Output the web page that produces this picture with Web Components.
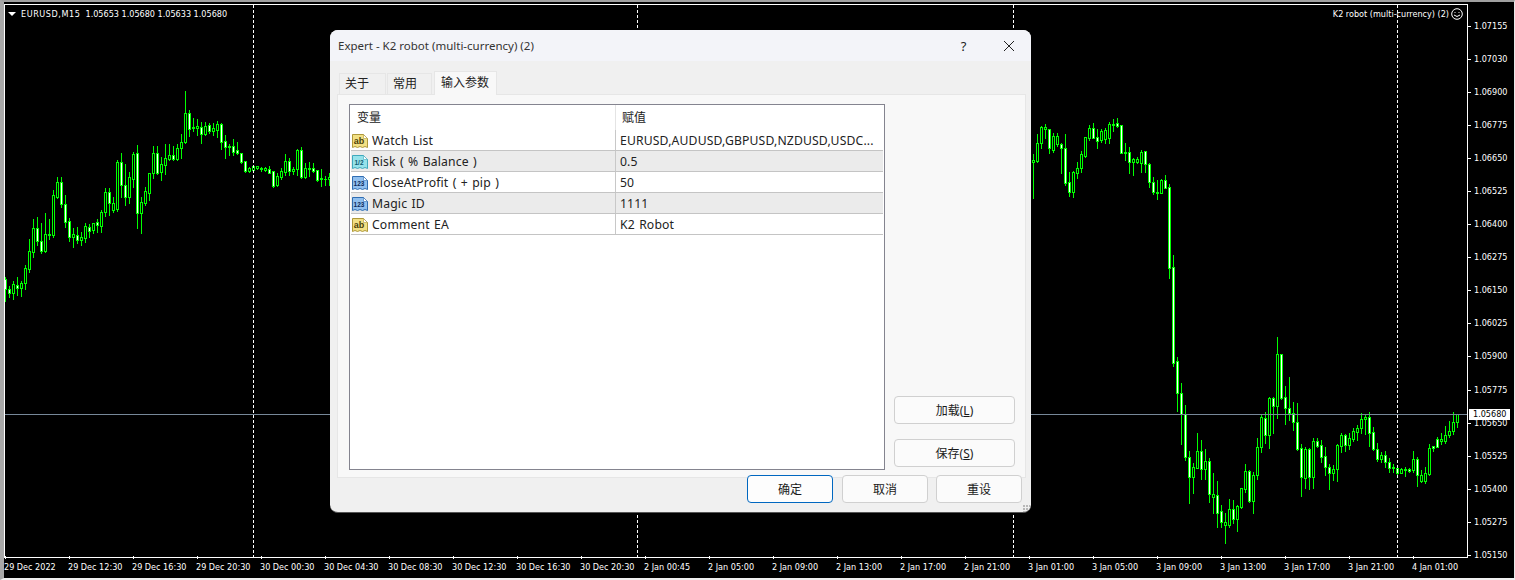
<!DOCTYPE html>
<html lang="zh"><head><meta charset="utf-8"><title>Expert - K2 robot</title>
<style>html,body{margin:0;padding:0;background:#000;overflow:hidden}</style>
</head><body>
<mt-terminal>
  <mt-chart></mt-chart>
  <mt-dialog caption="Expert - K2 robot (multi-currency) (2)">
    <param-row kind="ab" value="EURUSD,AUDUSD,GBPUSD,NZDUSD,USDC...">Watch List</param-row>
    <param-row kind="half" alt value="0.5">Risk ( % Balance )</param-row>
    <param-row kind="num" value="50">CloseAtProfit ( + pip )</param-row>
    <param-row kind="num" alt value="1111">Magic ID</param-row>
    <param-row kind="ab" value="K2 Robot">Comment EA</param-row>
  </mt-dialog>
</mt-terminal>
<script>
const L=[[277,279,289,301,1],[286,289,293,297,1],[281,284,293,299,0],[277,285,288,295,1],[281,283,288,296,0],[265,268,283,289,0],[239,251,269,272,0],[219,228,252,257,0],[217,228,241,245,1],[223,241,251,253,1],[213,234,251,252,0],[219,234,235,239,0],[190,195,235,237,0],[177,182,197,198,0],[177,182,204,207,1],[195,204,222,227,1],[218,221,237,241,1],[228,234,237,247,0],[227,235,240,243,1],[232,237,240,245,0],[223,226,238,242,0],[224,227,231,237,1],[223,223,230,233,0],[219,222,225,232,1],[210,212,226,232,0],[188,192,212,216,0],[188,192,203,215,1],[197,203,210,212,0],[160,162,209,211,0],[153,162,185,197,1],[164,185,197,205,1],[172,177,197,203,0],[152,154,179,187,0],[145,153,213,228,1],[197,202,213,233,0],[187,191,203,205,0],[173,173,193,200,0],
[146,153,173,178,0],[146,153,173,174,1],[157,164,172,180,0],[144,158,165,174,0],[144,155,159,160,0],[146,155,159,160,1],[144,148,159,160,0],[134,142,148,158,0],[91,113,142,143,0],[110,113,129,136,1],[118,127,128,131,0],[119,126,128,135,0],[122,127,134,143,1],[122,126,134,135,0],[123,125,131,133,1],[123,128,131,135,0],[121,124,130,137,0],[123,124,142,149,1],[135,141,147,158,1],[144,146,147,155,0],[139,146,152,155,1],[142,150,153,154,1],[153,153,162,163,1],[161,161,171,172,1],[167,168,171,172,0],[165,166,170,172,0],[166,166,168,169,0],[167,168,169,171,0],[167,168,170,171,0],[166,169,173,173,1],[171,171,186,187,1],[173,176,185,186,0],[168,171,177,179,0],[154,161,172,175,0],[158,161,171,175,1],[167,169,171,174,0],[149,150,169,175,0],[147,150,177,178,1],[163,168,177,178,0],[162,168,169,176,0],[163,168,171,172,1],[170,170,180,181,1],[169,178,179,186,0],[176,179,179,185,0],[173,177,179,185,0]];
const R=[[154,160,162,198,0],[134,143,161,162,0],[126,127,143,148,0],[124,127,129,138,0],[129,129,148,153,1],[133,136,150,152,0],[133,136,144,146,0],[143,144,148,173,1],[134,148,183,185,1],[172,182,192,196,1],[171,172,192,197,0],[162,168,173,178,0],[151,154,168,172,0],[137,137,156,157,0],[125,128,138,140,0],[123,128,138,138,1],[129,137,141,148,1],[129,131,140,142,0],[128,130,139,143,0],[122,124,138,143,0],[119,124,125,131,0],[118,123,126,127,1],[125,125,153,153,1],[143,152,153,160,0],[147,152,162,173,1],[158,159,162,175,0],[157,159,162,163,0],[150,152,163,172,0],[151,151,164,172,1],[163,164,182,187,1],[177,182,192,194,1],[180,192,193,199,0],[179,180,193,193,0],[175,180,188,188,1],[184,187,268,278,1],[255,267,363,366,1],[357,361,393,411,1],[383,393,414,444,1],[405,414,457,460,1],[451,457,477,503,1],[463,467,477,493,0],[433,451,468,468,0],[440,451,469,479,1],[449,461,469,479,0],[458,461,494,502,1],[473,494,497,513,0],[481,495,513,527,1],[505,511,522,527,1],[513,522,525,543,0],[499,509,525,527,0],[500,509,519,523,1],[505,506,519,531,0],[488,488,507,508,0],[464,471,489,492,0],[470,471,501,502,1],[472,475,501,513,0],[438,447,475,479,0],[415,417,447,452,0],[412,418,435,443,1],[397,398,435,448,0],[397,398,406,433,1],[337,354,406,418,0],[354,354,398,399,1],[386,397,408,424,1],[377,408,413,420,1],[402,413,422,430,1],[403,422,449,450,1],[444,448,477,496,1],[447,449,478,488,0],[448,449,477,489,1],[438,441,477,488,0],[438,441,446,447,1],[440,445,457,462,1],[447,456,467,475,1],[464,467,473,489,1],[465,469,473,480,0],[444,445,469,481,0],[433,435,446,452,0],[434,435,445,451,1],[433,438,445,449,0],[428,431,439,441,0],[425,428,432,440,0],[413,419,428,433,0],[415,417,419,434,0],[412,417,433,446,1],[427,432,449,450,1],[443,449,459,461,1],[452,455,459,462,0],[451,455,462,467,1],[458,462,468,472,1],[464,467,468,472,0],[467,468,473,474,1],[468,469,473,473,0],[467,469,470,476,0],[468,469,471,472,1],[451,459,470,472,0],[457,459,475,486,1],[470,475,481,482,0],[467,473,481,483,0],[444,448,474,475,0],[446,446,448,451,1],[437,439,447,447,1],[433,439,441,444,0],[426,435,441,443,0],[421,431,435,437,0],[412,422,431,434,0],[414,414,422,427,0]];
const PRICES=['1.07155','1.07030','1.06900','1.06775','1.06650','1.06525','1.06400','1.06275','1.06150','1.06025','1.05900','1.05775','1.05650','1.05525','1.05400','1.05275','1.05150'];
const TIMES=['29 Dec 2022','29 Dec 12:30','29 Dec 16:30','29 Dec 20:30','30 Dec 00:30','30 Dec 04:30','30 Dec 08:30','30 Dec 12:30','30 Dec 16:30','30 Dec 20:30','2 Jan 00:45','2 Jan 05:00','2 Jan 09:00','2 Jan 13:00','2 Jan 17:00','2 Jan 21:00','3 Jan 01:00','3 Jan 05:00','3 Jan 09:00','3 Jan 13:00','3 Jan 17:00','3 Jan 21:00','4 Jan 01:00'];
const UI='"Noto Sans","Noto Sans CJK SC",sans-serif';
const CHARTFONT='"DejaVu Sans Condensed","DejaVu Sans",sans-serif';

class MtTerminal extends HTMLElement{constructor(){super();this.attachShadow({mode:'open'}).innerHTML=`<style>
:host{display:block;position:relative;width:1515px;height:580px;overflow:hidden;background:#000}
</style><slot></slot>`}}
customElements.define('mt-terminal',MtTerminal);

class MtChart extends HTMLElement{constructor(){super();
 const candle=(k,c)=>{const x=5+4*k,[h,t,b,l,bear]=c;
  return `<rect x="${x}" y="${h}" width="1" height="${l-h+1}" fill="#0f0"/><rect x="${x-1}" y="${t}" width="3" height="${b-t+1}" fill="#0f0"/>`+
  (b-t>1?`<rect x="${x}" y="${t+1}" width="1" height="${b-t-1}" fill="${bear?'#fff':'#000'}"/>`:'')};
 const bars=L.map((c,i)=>candle(i,c)).join('')+R.map((c,i)=>candle(257+i,c)).join('');
 const seps=[253,637,1013,1397].map(x=>`<line x1="${x+.5}" x2="${x+.5}" y1="5" y2="557" stroke="#fff" stroke-dasharray="3 2"/>`).join('');
 this.attachShadow({mode:'open'}).innerHTML=`<style>
:host{display:grid;grid-template-columns:1463px 1fr;grid-template-rows:553px 1fr;box-sizing:border-box;width:1515px;height:580px;background:#000;
 border-top:2px solid #a0a0a0;border-left:4px solid #a8a8a8;border-right:1px solid #e8e8e8;border-bottom:2px solid #f0f0f0;padding-top:2px;
 font:9px ${CHARTFONT};color:#fff;position:relative}
.plot{position:relative;border:1px solid #fff;box-sizing:border-box;overflow:hidden;width:1464px;height:554px}
svg.c{display:block;position:absolute;left:0;top:0}
.hd{position:absolute;left:14px;top:3px;white-space:pre;line-height:12px;display:flex;align-items:center}
.hd i{display:block;width:0;height:0;border:4px solid transparent;border-top:4px solid #fff;border-bottom:0;margin-right:5px;margin-left:-11px}
.hd em{font-style:normal;letter-spacing:.55px}
.ea{position:absolute;right:4px;top:2px;display:flex;align-items:center;gap:2px;line-height:14px;white-space:pre}
.prices{grid-column:2;grid-row:1 / span 2;margin-left:1px;padding-top:15px;display:flex;flex-direction:column;position:relative}
.prices div{height:33.06px;line-height:14px;display:flex;gap:3px;align-items:flex-start;flex:none}
.prices b{display:block;width:3px;height:1px;background:#fff;margin-top:7px;font-weight:400}
.last{position:absolute;left:1px;top:405px;width:41px;height:11px;background:#fff;color:#000;line-height:11px;padding-left:4px;box-sizing:border-box}
.times{grid-column:1;grid-row:2;display:flex;margin-top:-1px}
.times div{width:64px;flex:none;white-space:nowrap;position:relative;padding-top:4px;line-height:14px;box-sizing:border-box}
.times b{position:absolute;left:1px;top:0;width:1px;height:3px;background:#fff}
</style>
<div class="plot">
 <svg class="c" width="1462" height="552" viewBox="5 5 1462 552" shape-rendering="crispEdges">${bars}${seps}<rect x="5" y="414" width="1462" height="1" fill="#778899"/></svg>
 <div class="hd"><i></i><em>EURUSD,M15</em>  1.05653 1.05680 1.05633 1.05680</div>
 <div class="ea"><span>K2 robot (multi-currency) (2)</span><svg width="12" height="12" viewBox="0 0 12 12" fill="none" stroke="#fff"><circle cx="6" cy="6" r="5.3"/><circle cx="4" cy="4.5" r=".6" fill="#fff" stroke="none"/><circle cx="8" cy="4.5" r=".6" fill="#fff" stroke="none"/><path d="M3 7q3 3 6 0"/></svg></div>
</div>
<div class="prices">${PRICES.map(p=>`<div><b></b>${p}</div>`).join('')}<span class="last">1.05680</span></div>
<div class="times">${TIMES.map(t=>`<div><b></b>${t}</div>`).join('')}</div>`}}
customElements.define('mt-chart',MtChart);

const ICONS={ab:['#f2e084','#ae983a','ab','#4a3f08','9'],half:['#96e2ea','#3fa9bd','1/2','#0f5a72','6.5'],num:['#90bfee','#2f6db2','123','#0e2c5a','6.5']};
class ParamRow extends HTMLElement{constructor(){super();
 const [f,s,t,tc,fs]=ICONS[this.getAttribute('kind')]||ICONS.ab;
 this.attachShadow({mode:'open'}).innerHTML=`<style>
:host{display:grid;grid-template-columns:265px 1fr;height:21px;box-sizing:border-box;border-bottom:1px solid #c4c4c4;background:#fff;color:#222;font:12.2px ${UI};line-height:20px;letter-spacing:.15px;word-spacing:1px}
:host([alt]){background:#ebebeb}
.n{display:flex;align-items:center;gap:4px;padding:1px 0 0 1px;box-sizing:border-box;border-right:1px solid #c8c8c8;white-space:pre;overflow:hidden}
.v{padding:1px 0 0 4px;box-sizing:border-box;white-space:pre;overflow:hidden}
svg{display:block;flex:none}
</style><div class="n"><svg width="16" height="16" viewBox="0 0 16 16"><path d="M.5 1.5H11.5L15.5 5.5V14.5l-2.5-1-2.5 1-2.5-1-2.5 1-2.5-1-2.5 1Z" fill="${f}" stroke="${s}"/><path d="M11.5 1.5V5.5H15.5Z" fill="#fff" stroke="${s}" stroke-width=".6"/><text x="7" y="11" text-anchor="middle" font-family="Liberation Sans,sans-serif" font-weight="700" font-size="${fs}" fill="${tc}" letter-spacing="0">${t}</text></svg><slot></slot></div><div class="v">${this.getAttribute('value')}</div>`}}
customElements.define('param-row',ParamRow);

class MtButton extends HTMLElement{constructor(){super();this.attachShadow({mode:'open'}).innerHTML=`<style>
:host{display:flex;align-items:center;justify-content:center;box-sizing:border-box;height:28px;border:1px solid #d0d0d0;border-radius:4px;background:#fbfbfb;color:#1a1a1a;font:12px ${UI};white-space:pre}
:host([primary]){border-color:#0067c0;background:#fdfdfd}
</style><slot></slot>`}}
customElements.define('mt-button',MtButton);

class MtDialog extends HTMLElement{constructor(){super();this.attachShadow({mode:'open'}).innerHTML=`<style>
:host{position:absolute;left:330px;top:30px;width:701px;height:483px;box-sizing:border-box;display:flex;flex-direction:column;background:#f0f0f0;border-radius:8px;overflow:hidden;font:12px ${UI};color:#222;border-bottom:1px solid #555}
.title{height:31px;flex:none;background:#f3f4f9;display:flex;align-items:center;padding-left:8px;font-size:11.5px;color:#333}
.title span{flex:1}
.help{width:45px;text-align:center;font-size:13px;color:#222}
.close{width:45px;display:flex;justify-content:center}
.tabs{height:33px;flex:none;display:flex;align-items:flex-end;padding-left:9px;gap:1px;box-sizing:border-box}
.tab{height:21px;box-sizing:border-box;border:1px solid #e6e6e6;border-bottom:0;width:47px;display:flex;align-items:center;padding-left:5px;line-height:20px}
.tab+.tab{width:45px;margin-right:1px}
.tab.on{height:24px;width:63px;background:#f8f8f8;margin-bottom:-1px;position:relative;z-index:1;padding:0 0 2px 6px;margin-right:0}
.panel{margin:0 5px 0 7px;height:384px;flex:none;box-sizing:border-box;border:1px solid #e6e6e6;background:#f8f8f8;padding:9px 9px 7px 11px;display:flex;gap:9px}
.table{width:536px;height:366px;box-sizing:border-box;border:1px solid #84848f;background:#fff;padding:0 1px;flex:none}
.hdr{display:grid;grid-template-columns:265px 1fr;height:25px;line-height:25px;font-size:12px}
.hdr div:first-child{padding-left:6px;border-right:1px solid #e4e4e4}
.hdr div:last-child{padding-left:6px}
.side{flex:none;width:121px;display:flex;flex-direction:column;justify-content:flex-end;gap:15px;padding-bottom:3px}
.foot{display:flex;justify-content:flex-end;padding-right:9px;margin-top:-3px;position:relative}
.foot mt-button{width:86px;flex:none}
.foot mt-button:nth-child(2){margin-left:9px}
.foot mt-button:nth-child(3){margin-left:8px}
u{text-underline-offset:1px}
.grip{position:absolute;right:1px;bottom:-9px;width:7px;height:7px;background:radial-gradient(circle at 1px 1px,#b8b8b8 1px,transparent 1.2px) 0 0/3px 3px}
</style>
<div class="title"><span>${this.getAttribute('caption')}</span><div class="help">?</div><div class="close"><svg width="12" height="12" viewBox="0 0 12 12" stroke="#222" fill="none"><path d="M1 1L11 11M11 1L1 11"/></svg></div></div>
<div class="tabs"><div class="tab">关于</div><div class="tab">常用</div><div class="tab on">输入参数</div></div>
<div class="panel"><div class="table"><div class="hdr"><div>变量</div><div>赋值</div></div><slot></slot></div>
<div class="side"><mt-button>加载(<u>L</u>)</mt-button><mt-button>保存(<u>S</u>)</mt-button></div></div>
<div class="foot"><mt-button primary>确定</mt-button><mt-button>取消</mt-button><mt-button>重设</mt-button><div class="grip"></div></div>`}}
customElements.define('mt-dialog',MtDialog);
</script>
</body></html>
